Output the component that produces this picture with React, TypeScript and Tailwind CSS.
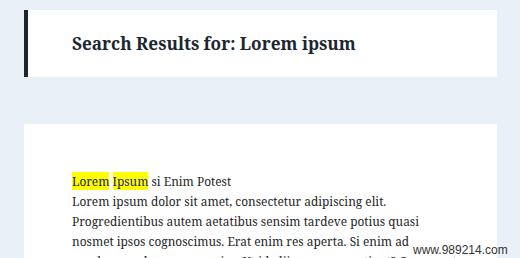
import React from "react";

export default function App() {
  return (
    <div className="relative h-[258px] w-[520px] overflow-hidden bg-[#e9f0f8] pl-6 pr-[23px] pt-[10px]">
      <div className="flex h-[67px] items-center border-l-4 border-[#1b2631] bg-white pl-11">
        <h1 className="font-['Noto_Serif','DejaVu_Serif',serif] text-[17.2px] font-bold leading-none text-[#1b2631]">
          Search Results for: Lorem ipsum
        </h1>
      </div>
      <div className="mt-[47px] bg-white pl-12 pr-6 pt-[47px] pb-10">
        <p className="whitespace-nowrap font-['Noto_Serif','DejaVu_Serif',serif] text-[11.9px] leading-[20px] text-[#262626]">
          <mark className="bg-[#ffff00] py-[1px] text-[#1a1a2e]">Lorem</mark>{" "}
          <mark className="bg-[#ffff00] py-[1px] text-[#1c1c7a]">Ipsum</mark> si Enim Potest
          <br />
          Lorem ipsum dolor sit amet, consectetur adipiscing elit.
          <br />
          Progredientibus autem aetatibus sensim tardeve potius quasi
          <br />
          nosmet ipsos cognoscimus. Erat enim res aperta. Si enim ad
          <br />
          quodam modo nos pervenire. Ut id aliis narrare gestiant? Quae sunt
        </p>
      </div>
      <div className="absolute left-[413px] top-[243px] font-['Liberation_Sans',sans-serif] text-[12px] leading-[14px] text-[#333]">
        www.989214.com
      </div>
    </div>
  );
}
